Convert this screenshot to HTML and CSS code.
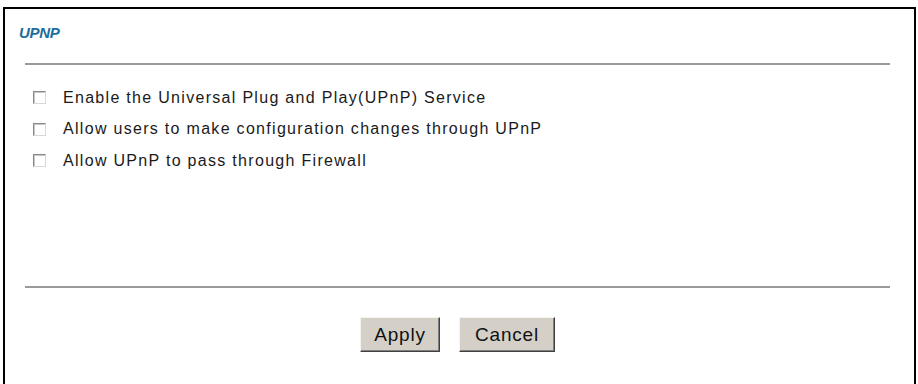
FILE: index.html
```html
<!DOCTYPE html>
<html>
<head>
<meta charset="utf-8">
<link rel="stylesheet" href="styles.css">
</head>
<body>
<div class="panel">
  <h1 class="title">UPNP</h1>
  <hr class="rule">
  <div class="options">
    <label class="opt"><input type="checkbox" class="cb"><span>Enable the Universal Plug and Play(UPnP) Service</span></label>
    <label class="opt"><input type="checkbox" class="cb"><span>Allow users to make configuration changes through UPnP</span></label>
    <label class="opt"><input type="checkbox" class="cb"><span>Allow UPnP to pass through Firewall</span></label>
  </div>
  <hr class="rule">
  <div class="actions">
    <button class="btn apply">Apply</button>
    <button class="btn cancel">Cancel</button>
  </div>
</div>
</body>
</html>
```
FILE: styles.css
```css
html, body {
  margin: 0;
  padding: 0;
  background: #fff;
}
body {
  font-family: "Liberation Sans", Arial, sans-serif;
  height: 384px;
  overflow: hidden;
}
.panel {
  margin: 7px 0 0 3px;
  width: 913px;
  height: 377px;
  box-sizing: border-box;
  border: 2px solid #000;
  border-bottom: 0;
  padding: 0 24px 0 20px;
}
.title {
  margin: 15px 0 0 -6px;
  font-size: 15px;
  font-weight: bold;
  font-style: italic;
  color: #1c6e9c;
  letter-spacing: -0.3px;
  line-height: 18px;
}
.rule {
  margin: 0;
  border: 0;
  height: 2px;
  background: #9a9a9a;
}
.title + .rule {
  margin-top: 21px;
}
.options {
  display: flex;
  flex-direction: column;
  padding-top: 17px;
  height: 221px;
  box-sizing: border-box;
}
.opt {
  display: flex;
  align-items: center;
  height: 31.5px;
  font-size: 16px;
  letter-spacing: 1.3px;
  color: #1a1a1a;
}
.cb {
  appearance: none;
  -webkit-appearance: none;
  width: 13px;
  height: 13px;
  margin: 0 17px 0 8px;
  box-sizing: border-box;
  border: 1px solid;
  border-color: #8a8a8a #d8d8d8 #d8d8d8 #8a8a8a;
  box-shadow: inset 1px 1px 0 #c8c8c8;
  background: #fff;
}
.actions {
  display: flex;
  justify-content: center;
  gap: 19px;
  padding-top: 29px;
}
.btn {
  font-family: "Liberation Sans", Arial, sans-serif;
  font-size: 19px;
  letter-spacing: 0.8px;
  color: #111;
  background: #d4d0c8;
  height: 35px;
  box-sizing: border-box;
  border: 1px solid;
  border-color: #f4f4f0 #404040 #404040 #f4f4f0;
  box-shadow: inset -1px -1px 0 #808080;
  padding: 0;
}
.apply { width: 80px; }
.cancel { width: 96px; }
```
